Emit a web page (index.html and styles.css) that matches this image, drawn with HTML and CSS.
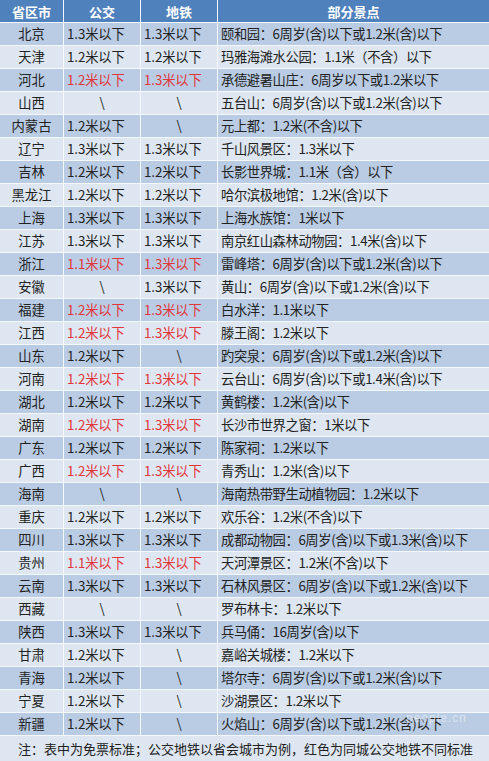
FILE: index.html
```html
<!DOCTYPE html>
<html lang="zh">
<head>
<meta charset="utf-8">
<title>儿童免票标准</title>
<link rel="stylesheet" href="styles.css">
</head>
<body>
<div class="sheet">
  <div class="grid">
    <div class="h">省区市</div><div class="h">公交</div><div class="h">地铁</div><div class="h">部分景点</div>

    <div class="c p d">北京</div><div class="c n d">1.3米以下</div><div class="c n d">1.3米以下</div><div class="c s d">颐和园：6周岁(含)以下或1.2米(含)以下</div>
    <div class="c p">天津</div><div class="c n">1.2米以下</div><div class="c n">1.2米以下</div><div class="c s">玛雅海滩水公园：1.1米（不含）以下</div>
    <div class="c p d">河北</div><div class="c n d r">1.2米以下</div><div class="c n d r">1.3米以下</div><div class="c s d">承德避暑山庄：6周岁以下或1.2米以下</div>
    <div class="c p">山西</div><div class="c x">\</div><div class="c x">\</div><div class="c s">五台山：6周岁(含)以下或1.2米(含)以下</div>
    <div class="c p d">内蒙古</div><div class="c n d">1.2米以下</div><div class="c x d">\</div><div class="c s d">元上都：1.2米(不含)以下</div>
    <div class="c p">辽宁</div><div class="c n">1.3米以下</div><div class="c n">1.3米以下</div><div class="c s">千山风景区：1.3米以下</div>
    <div class="c p d">吉林</div><div class="c n d">1.2米以下</div><div class="c n d">1.2米以下</div><div class="c s d">长影世界城：1.1米（含）以下</div>
    <div class="c p">黑龙江</div><div class="c n">1.2米以下</div><div class="c n">1.2米以下</div><div class="c s">哈尔滨极地馆：1.2米(含)以下</div>
    <div class="c p d">上海</div><div class="c n d">1.3米以下</div><div class="c n d">1.3米以下</div><div class="c s d">上海水族馆：1米以下</div>
    <div class="c p">江苏</div><div class="c n">1.3米以下</div><div class="c n">1.3米以下</div><div class="c s">南京红山森林动物园：1.4米(含)以下</div>
    <div class="c p d">浙江</div><div class="c n d r">1.1米以下</div><div class="c n d r">1.3米以下</div><div class="c s d">雷峰塔：6周岁(含)以下或1.2米(含)以下</div>
    <div class="c p">安徽</div><div class="c x">\</div><div class="c n">1.3米以下</div><div class="c s">黄山：6周岁(含)以下或1.2米(含)以下</div>
    <div class="c p d">福建</div><div class="c n d r">1.2米以下</div><div class="c n d r">1.3米以下</div><div class="c s d">白水洋：1.1米以下</div>
    <div class="c p">江西</div><div class="c n r">1.2米以下</div><div class="c n r">1.3米以下</div><div class="c s">滕王阁：1.2米以下</div>
    <div class="c p d">山东</div><div class="c n d">1.2米以下</div><div class="c x d">\</div><div class="c s d">趵突泉：6周岁(含)以下或1.2米(含)以下</div>
    <div class="c p">河南</div><div class="c n r">1.2米以下</div><div class="c n r">1.3米以下</div><div class="c s">云台山：6周岁(含)以下或1.4米(含)以下</div>
    <div class="c p d">湖北</div><div class="c n d">1.2米以下</div><div class="c n d">1.2米以下</div><div class="c s d">黄鹤楼：1.2米(含)以下</div>
    <div class="c p">湖南</div><div class="c n r">1.2米以下</div><div class="c n r">1.3米以下</div><div class="c s">长沙市世界之窗：1米以下</div>
    <div class="c p d">广东</div><div class="c n d">1.2米以下</div><div class="c n d">1.2米以下</div><div class="c s d">陈家祠：1.2米以下</div>
    <div class="c p">广西</div><div class="c n r">1.2米以下</div><div class="c n r">1.3米以下</div><div class="c s">青秀山：1.2米(含)以下</div>
    <div class="c p d">海南</div><div class="c x d">\</div><div class="c x d">\</div><div class="c s d">海南热带野生动植物园：1.2米以下</div>
    <div class="c p">重庆</div><div class="c n">1.2米以下</div><div class="c n">1.2米以下</div><div class="c s">欢乐谷：1.2米(不含)以下</div>
    <div class="c p d">四川</div><div class="c n d">1.3米以下</div><div class="c n d">1.3米以下</div><div class="c s d">成都动物园：6周岁(含)以下或1.3米(含)以下</div>
    <div class="c p">贵州</div><div class="c n r">1.1米以下</div><div class="c n r">1.3米以下</div><div class="c s">天河潭景区：1.2米(不含)以下</div>
    <div class="c p d">云南</div><div class="c n d">1.3米以下</div><div class="c n d">1.3米以下</div><div class="c s d">石林风景区：6周岁(含)以下或1.2米(含)以下</div>
    <div class="c p">西藏</div><div class="c x">\</div><div class="c x">\</div><div class="c s">罗布林卡：1.2米以下</div>
    <div class="c p d">陕西</div><div class="c n d">1.3米以下</div><div class="c n d">1.3米以下</div><div class="c s d">兵马俑：16周岁(含)以下</div>
    <div class="c p">甘肃</div><div class="c n">1.2米以下</div><div class="c x">\</div><div class="c s">嘉峪关城楼：1.2米以下</div>
    <div class="c p d">青海</div><div class="c n d">1.2米以下</div><div class="c x d">\</div><div class="c s d">塔尔寺：6周岁(含)以下或1.2米(含)以下</div>
    <div class="c p">宁夏</div><div class="c n">1.2米以下</div><div class="c x">\</div><div class="c s">沙湖景区：1.2米以下</div>
    <div class="c p d">新疆</div><div class="c n d">1.2米以下</div><div class="c x d">\</div><div class="c s d">火焰山：6周岁(含)以下或1.2米(含)以下</div>
  </div>
  <div class="note">注：表中为免票标准；公交地铁以省会城市为例，红色为同城公交地铁不同标准</div>
  <div class="mark">people.cn</div>
</div>
</body>
</html>
```

FILE: styles.css
```css
* { box-sizing: border-box; }
html, body { margin: 0; padding: 0; background: #ffffff; }
body {
  width: 489px;
  height: 761px;
  overflow: hidden;
  font-family: "Noto Sans CJK SC", "Noto Sans", "Liberation Sans", sans-serif;
  font-size: 13.3px;
  color: #222222;
}
.sheet {
  position: relative;
  width: 489px;
  height: 761px;
  display: flex;
  flex-direction: column;
  gap: 1px;
  background: #f4f7fb;
}
.grid {
  display: grid;
  grid-template-columns: 63px 76px 76px 1fr;
  grid-template-rows: 22px;
  grid-auto-rows: 22px;
  gap: 1px;
  background: #f4f7fb;
}
.h {
  background: #4f81bd;
  color: #ffffff;
  font-weight: bold;
  font-size: 13px;
  display: flex;
  align-items: center;
  justify-content: center;
  line-height: 1;
}
.c {
  background: #dde6f1;
  display: flex;
  align-items: center;
  line-height: 1;
  white-space: nowrap;
  overflow: hidden;
}
.c.d { background: #b9cce4; }
.p { justify-content: center; }
.n { padding-left: 3px; letter-spacing: -0.1px; }
.x { justify-content: center; }
.s { padding-left: 3px; letter-spacing: -0.4px; }
.r { color: #e3343a; }
.note {
  flex: 1;
  background: #dde6f1;
  display: flex;
  align-items: center;
  padding-left: 18px;
  font-size: 13px;
  line-height: 1;
  white-space: nowrap;
}
.mark {
  position: absolute;
  right: 22px;
  bottom: 36px;
  font-family: "Liberation Sans", sans-serif;
  font-size: 12px;
  color: rgba(255, 255, 255, 0.5);
  letter-spacing: 1px;
}
```
